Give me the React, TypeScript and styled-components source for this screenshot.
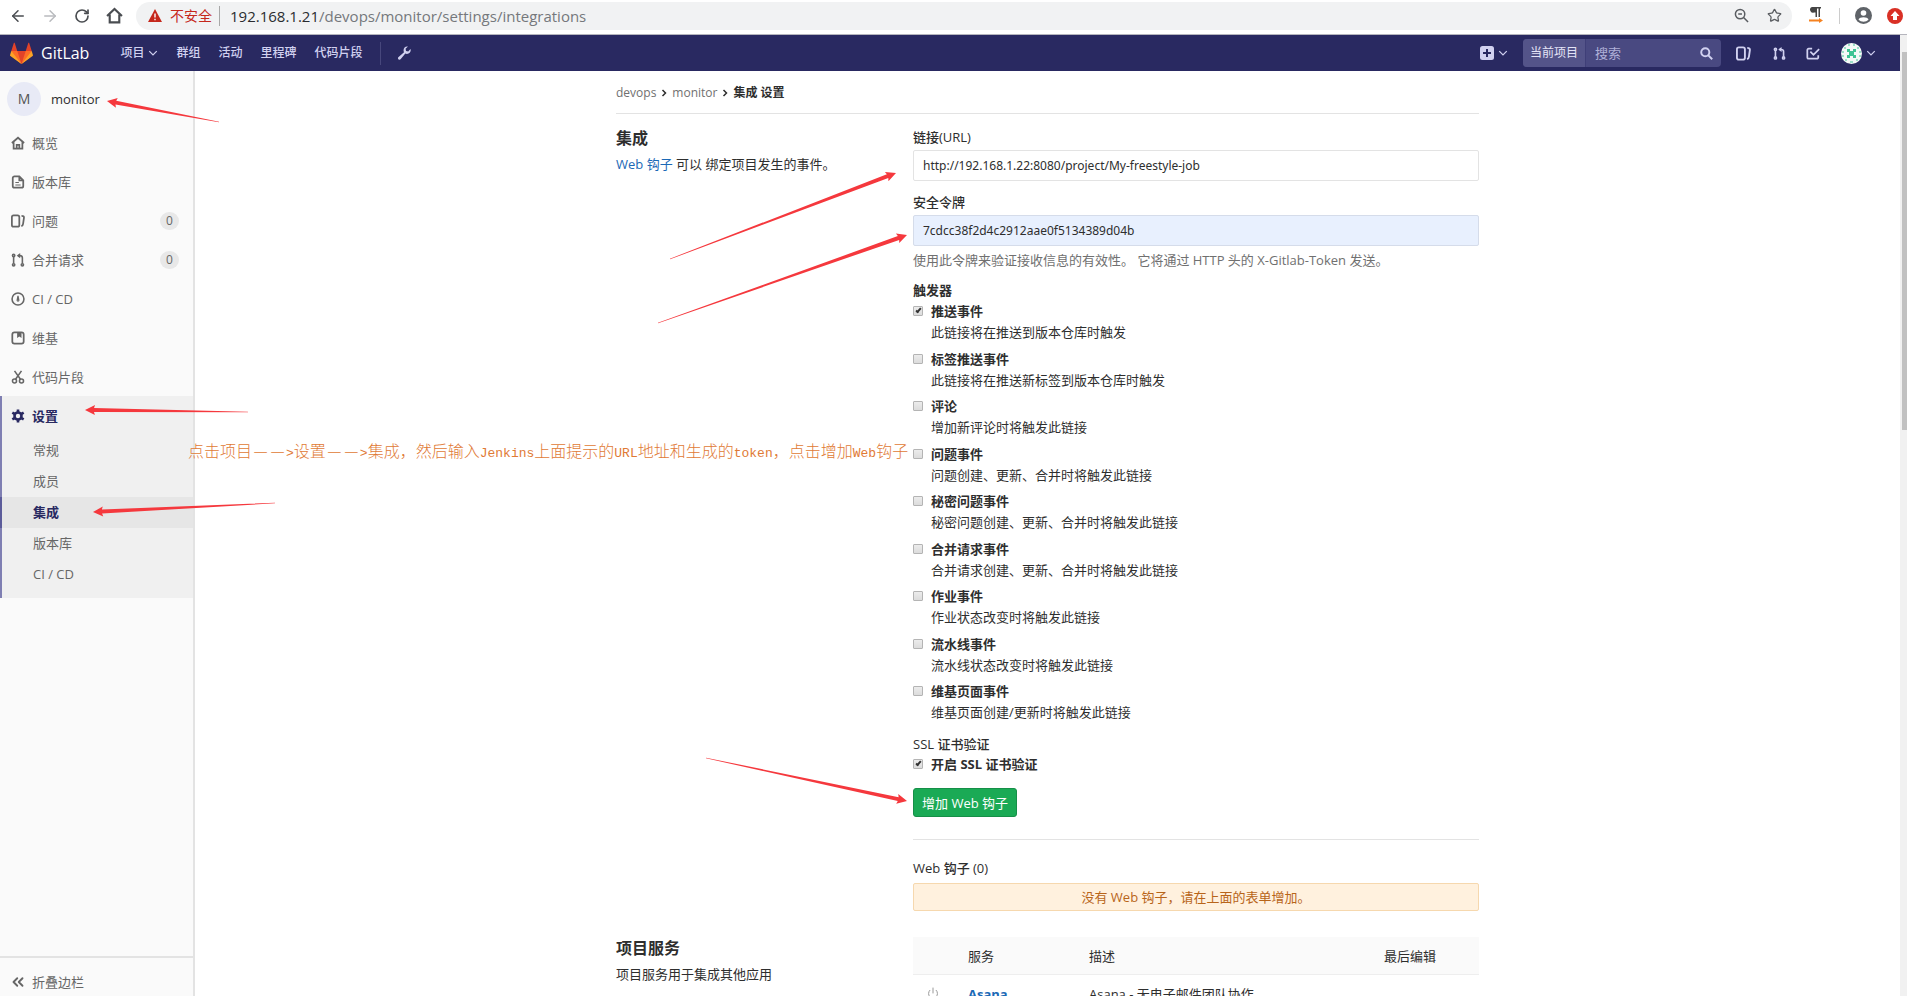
import React from 'react';
import styled, { createGlobalStyle, css } from 'styled-components';
import { ArrowLeft, ArrowRight, RotateCw, Star, Power, ChevronsLeft } from 'lucide-react';

const cjk = '"Open Sans", "Noto Sans CJK SC", sans-serif';

const Global = createGlobalStyle`
  *, *::before, *::after { box-sizing: border-box; }
  body { margin: 0; background: #fff; color: #2e2e2e; font: 13px/20px ${cjk}; overflow: hidden; }
  button, input { font: inherit; color: inherit; }
  a { color: inherit; text-decoration: none; }
  h2, p, ul, fieldset { margin: 0; padding: 0; border: 0; list-style: none; }
`;

const Screen = styled.div`
  position: relative;
  display: flex;
  flex-direction: column;
  height: 100vh;
  overflow: hidden;
`;

/* Browser bar */
const BrowserBar = styled.div`
  display: flex;
  align-items: center;
  flex: none;
  height: 35px;
  padding: 0 4px 3px 8px;
  border-bottom: 1px solid #b5b5bd;
  color: #5a5d61;
`;
const BarButton = styled.button<{ $dim?: boolean }>`
  display: flex;
  justify-content: center;
  flex: none;
  width: 20px;
  margin-right: 12px;
  padding: 0;
  border: 0;
  background: none;
  color: ${(p) => (p.$dim ? '#b9bbbe' : '#4a4d51')};
`;
const Address = styled.div`
  display: flex;
  align-items: center;
  flex: 1;
  height: 28px;
  padding: 0 10px 0 12px;
  border-radius: 14px;
  background: #f1f2f3;
`;
const Insecure = styled.span`
  margin-left: 8px;
  padding-right: 7px;
  border-right: 1px solid #a8a8a8;
  color: #c5281c;
  font-size: 14px;
`;
const Url = styled.span`
  flex: 1;
  margin-left: 10px;
  color: #75787c;
  font-size: 15px;
  b { font-weight: 400; color: #2a2c2f; }
`;
const AddressTools = styled.div`
  display: flex;
  align-items: center;
  gap: 18px;
`;
const Extensions = styled.div`
  display: flex;
  align-items: center;
  gap: 15px;
  margin-left: 15px;
`;
const Rule = styled.span<{ $color: string; $height: number }>`
  width: 1px;
  height: ${(p) => p.$height}px;
  background: ${(p) => p.$color};
`;

/* Page under the browser bar */
const Viewport = styled.div`
  display: flex;
  flex: 1;
  min-height: 0;
`;
const Page = styled.div`
  display: flex;
  flex-direction: column;
  flex: 1;
  min-width: 0;
`;
const ScrollTrack = styled.div`
  display: flex;
  flex-direction: column;
  flex: none;
  width: 7px;
  padding: 17px 0 0 2px;
  background: #f1f1f1;
`;
const ScrollThumb = styled.div`
  height: 40%;
  background: #c1c1c1;
`;

const Navbar = styled.header`
  display: flex;
  align-items: center;
  justify-content: space-between;
  flex: none;
  height: 36px;
  padding: 0 24px 0 10px;
  background: #292961;
  color: #d1d1f0;
`;
const NavGroup = styled.nav`
  display: flex;
  align-items: center;
`;
const Brand = styled.a`
  display: flex;
  align-items: center;
  gap: 8px;
  margin-right: 31px;
  color: #fff;
  font-size: 16px;
`;
const NavLink = styled.a`
  display: flex;
  align-items: center;
  gap: 4px;
  margin-right: 18px;
  font-size: 12px;
  font-weight: 500;
`;
const NavButton = styled.button<{ $gap?: number }>`
  display: flex;
  align-items: center;
  gap: 4px;
  padding: 0;
  border: 0;
  background: none;
  margin-left: ${(p) => p.$gap ?? 0}px;
`;
const Search = styled.form`
  display: flex;
  align-items: center;
  width: 198px;
  height: 28px;
  margin-left: 15px;
  padding-right: 8px;
  border-radius: 4px;
  overflow: hidden;
  background: #494981;
`;
const SearchScope = styled.span`
  padding: 4px 7px;
  border-right: 1px solid #3f3f78;
  background: #545489;
  color: #e4e4f7;
  font-size: 12px;
`;
const SearchInput = styled.input`
  flex: 1;
  min-width: 0;
  padding: 0 9px;
  border: 0;
  background: none;
  &::placeholder { color: #b0b0d8; opacity: 1; }
`;

const Body = styled.div`
  display: flex;
  flex: 1;
  min-height: 0;
`;
const Sidebar = styled.aside`
  display: flex;
  flex-direction: column;
  flex: none;
  width: 195px;
  border-right: 2px solid #e3e3e3;
  background: #fafafa;
  color: #666;
`;
const Project = styled.a`
  display: flex;
  align-items: center;
  gap: 10px;
  padding: 11px 7px 7px;
  color: #2e2e2e;
  font-weight: 500;
`;
const Initial = styled.span`
  width: 34px;
  height: 34px;
  border-radius: 50%;
  background: #e8eaf6;
  color: #555;
  font-size: 14px;
  line-height: 34px;
  text-align: center;
`;
const Menu = styled.ul`
  flex: 1;
`;
const activeText = css`
  color: #292961;
  font-weight: 700;
`;
const MenuLink = styled.a<{ $active?: boolean }>`
  display: flex;
  align-items: center;
  gap: 7px;
  height: 39px;
  padding: 0 14px 0 11px;
  ${(p) => p.$active && activeText}
`;
const MenuLabel = styled.span`
  flex: 1;
`;
const Count = styled.span`
  width: 19px;
  border-radius: 9px;
  background: #e8e8e8;
  font-size: 12px;
  line-height: 18px;
  text-align: center;
`;
const ActiveGroup = styled.li`
  padding-bottom: 8px;
  background: #f0f0f0;
  box-shadow: inset 2px 0 #7f7fb2;
`;
const SubLink = styled.a<{ $active?: boolean }>`
  display: block;
  padding: 0 33px;
  line-height: 31px;
  ${(p) => p.$active && css`${activeText} background: #e6e6e6; box-shadow: inset 2px 0 #5c5c9a;`}
`;
const Collapse = styled.button`
  display: flex;
  align-items: center;
  gap: 5px;
  height: 40px;
  padding: 10px 9px 0;
  border: 0;
  border-top: 2px solid #e3e3e3;
  background: none;
`;

const Main = styled.main`
  flex: 1;
  min-width: 0;
  overflow: hidden;
`;
const Container = styled.div`
  max-width: 863px;
  margin: 0 auto;
`;
const Breadcrumbs = styled.nav`
  display: flex;
  align-items: center;
  gap: 4px;
  height: 43px;
  padding-top: 2px;
  border-bottom: 1px solid #e3e3e3;
  color: #707070;
  font-size: 12px;
  svg { color: #2e2e2e; }
  b { color: #2e2e2e; }
`;
const Section = styled.section<{ $top: number }>`
  display: grid;
  grid-template-columns: 297px minmax(0, 1fr);
  padding-top: ${(p) => p.$top}px;
`;
const Title = styled.h2`
  margin-bottom: 4px;
  font-size: 16px;
  line-height: 24px;
`;
const TextLink = styled.a<{ $bold?: boolean }>`
  color: #1b69b6;
  font-weight: ${(p) => (p.$bold ? 700 : 400)};
`;
const Field = styled.div`
  display: flex;
  flex-direction: column;
  margin-bottom: 10px;
`;
const Caption = styled.label`
  margin-bottom: 2px;
  font-weight: 500;
  line-height: 22px;
`;
const TextInput = styled.input<{ $filled?: boolean }>`
  height: 31px;
  padding: 0 9px;
  border: 1px solid ${(p) => (p.$filled ? '#d5dcea' : '#e3e3e3')};
  border-radius: 2px;
  background: ${(p) => (p.$filled ? '#e8f0fe' : '#fff')};
  font-family: "Noto Sans", sans-serif;
  font-size: 12px;
`;
const Hint = styled.p`
  margin-top: 4px;
  color: #707070;
`;
const Legend = styled.div`
  margin-bottom: 1px;
  font-weight: 700;
`;
const Options = styled.div`
  display: flex;
  flex-direction: column;
  justify-content: space-between;
  min-height: 422px;
`;
const Option = styled.label`
  display: grid;
  grid-template-columns: 10px 1fr;
  column-gap: 8px;
  line-height: 21px;
  b { font-weight: 700; }
  span { grid-column: 2; }
`;
const Check = styled.input`
  appearance: none;
  width: 10px;
  height: 10px;
  margin: 5px 0 0;
  border: 1px solid #b4b4b4;
  border-radius: 1px;
  background: linear-gradient(#ececec, #dcdcdc);
  &:checked::after {
    content: '';
    display: block;
    width: 3px;
    height: 6px;
    margin: 0 0 0 3px;
    border: solid #333;
    border-width: 0 2px 2px 0;
    transform: rotate(40deg);
  }
`;
const Submit = styled.button`
  align-self: flex-start;
  height: 29px;
  margin-top: 13px;
  padding: 0 8px;
  border: 1px solid #168f48;
  border-radius: 3px;
  background: #1aaa55;
  color: #fff;
`;
const Form = styled.form`
  display: flex;
  flex-direction: column;
  padding-bottom: 22px;
  border-bottom: 1px solid #e3e3e3;
`;
const SslTitle = styled.div`
  margin-top: 11px;
  font-weight: 500;
`;
const HooksTitle = styled.div`
  margin: 18px 0 5px;
  font-weight: 500;
`;
const Notice = styled.div`
  padding: 3px;
  border: 1px solid #f6d8ae;
  border-radius: 2px;
  background: #fff1de;
  color: #b8651a;
  text-align: center;
`;
const Services = styled.table`
  width: 100%;
  margin-top: 1px;
  border-collapse: collapse;
  table-layout: fixed;
  th, td { padding: 9px 0 8px; text-align: left; font-weight: 400; }
  th { background: #fafafa; border-bottom: 1px solid #eee; }
  td { white-space: nowrap; }
  td:first-child { padding-left: 14px; color: #999; }
`;

/* Hand-made notes on top of the page */
const Overlay = styled.svg`
  position: absolute;
  top: 0;
  left: 0;
  width: 100%;
  height: 100%;
  pointer-events: none;
`;
const Remark = styled.p`
  position: absolute;
  top: 438px;
  left: 188px;
  color: #df7a35;
  font-family: "Noto Sans CJK SC", sans-serif;
  font-size: 16px;
  font-weight: 300;
  line-height: 24px;
  white-space: nowrap;
  code { font: 13px/24px "Liberation Mono", monospace; }
`;
const Dash = styled.span`
  display: inline-block;
  width: 17px;
  text-align: center;
`;

type IconProps = { size?: number; children: React.ReactNode; width?: number };
const Icon = ({ size = 14, width = 2, children }: IconProps) => (
  <svg width={size} height={size} viewBox="0 0 16 16" fill="none" stroke="currentColor" strokeWidth={width} aria-hidden="true">
    {children}
  </svg>
);
const Chevron = () => (
  <Icon size={10}><path d="M2 5l6 6 6-6" /></Icon>
);
const IssuesShape = () => (
  <><rect x="1" y="1.5" width="8.5" height="13" rx="2" /><path d="M12 2c2 0 3 .8 2.8 2.300l-1 7c-.2 1.500-.7 2.200-2 2.700" /></>
);
const MergeShape = () => (
  <><circle cx="3" cy="13.500" r="1.300" /><circle cx="13" cy="13.500" r="1.300" /><circle cx="3" cy="2.800" r="1.300" /><path d="M3 4v8M13 12V5.500c0-1.500-1-2.500-3-2.500H8" /><path fill="currentColor" stroke="none" d="M10.500 0v6L6.500 3z" /></>
);

const Logo = () => (
  <svg width="23" height="23" viewBox="0 0 36 36" aria-hidden="true">
    <path fill="#e24329" d="M2 14l9.380 9v-9l-4-12.280c-.205-.632-1.176-.632-1.380 0z" />
    <path fill="#e24329" d="M34 14l-9.380 9v-9l4-12.280c.205-.632 1.176-.632 1.380 0z" />
    <path fill="#e24329" d="M18 34.380L3 14h30z" />
    <path fill="#fc6d26" d="M18 34.380L11.380 14H2l4 11z" />
    <path fill="#fc6d26" d="M18 34.380L24.620 14H34l-4 11z" />
    <path fill="#fca326" d="M2 14L.1 20.160c-.18.565 0 1.200.5 1.560l17.420 12.660z" />
    <path fill="#fca326" d="M34 14l1.900 6.160c.18.565 0 1.200-.5 1.560L18 34.380z" />
  </svg>
);

const Identicon = () => (
  <svg width="21" height="21" viewBox="0 0 21 21" aria-hidden="true">
    <circle cx="10.500" cy="10.500" r="10.500" fill="#f4f9f7" />
    <g fill="#3fc495">
      <path d="M6 6h3v2h3V6h3v3h-2v3h2v3h-3v-2H9v2H6v-3h2V9H6z" />
    </g>
    <path fill="#9be0c8" d="M7 1h2v2H7zM12 1h2v2h-2zM3 4h2v2H3zM16 4h2v2h-2zM1 8h2v2H1zM18 8h2v2h-2zM1 12h2v2H1zM18 12h2v2h-2zM4 16h2v2H4zM15 16h2v2h-2zM9 18h3v2H9z" />
  </svg>
);

type ArrowProps = { tail: [number, number]; tip: [number, number] };
const Arrow = ({ tail, tip }: ArrowProps) => {
  const dx = tip[0] - tail[0];
  const dy = tip[1] - tail[1];
  const len = Math.hypot(dx, dy);
  const angle = (Math.atan2(dy, dx) * 180) / Math.PI;
  const neck = len - 9;
  return (
    <path
      fill="#f5383d"
      transform={`translate(${tail[0]} ${tail[1]}) rotate(${angle})`}
      d={`M0 -.3L${neck} -2L${neck - 1} -5L${len} 0L${neck - 1} 5L${neck} 2L0 .3Z`}
    />
  );
};

const arrows: ArrowProps[] = [
  { tail: [219, 122], tip: [107, 101] },
  { tail: [248, 412], tip: [85, 410] },
  { tail: [275, 503], tip: [93, 512] },
  { tail: [670, 259], tip: [896, 173] },
  { tail: [658, 323], tip: [907, 235] },
  { tail: [706, 758], tip: [907, 801] },
];

const menu: { label: string; count?: number; icon: React.ReactNode }[] = [
  { label: '概览', icon: <Icon><path d="M1 8l7-6 7 6M3 7v7.500h10V7M6.500 14v-4h3v4" /></Icon> },
  { label: '版本库', icon: <Icon><path d="M9.500 1.500H4a2 2 0 00-2 2v9a2 2 0 002 2h8a2 2 0 002-2V6zM9.500 1.500V6H14" /><path strokeWidth="1.200" d="M5 8.500h4M5 11.500h6" /></Icon> },
  { label: '问题', count: 0, icon: <Icon><IssuesShape /></Icon> },
  { label: '合并请求', count: 0, icon: <Icon width={1.8}><MergeShape /></Icon> },
  { label: 'CI / CD', icon: <Icon width={1.8}><circle cx="8" cy="8" r="6.800" /><path strokeWidth="1.400" d="M8 4.500L7 9.500a1 1 0 002 0z" /></Icon> },
  { label: '维基', icon: <Icon><rect x="1.500" y="1.500" width="13" height="13" rx="2.500" /><path fill="currentColor" stroke="none" d="M7 2h5v6L9.500 6.200 7 8z" /></Icon> },
  { label: '代码片段', icon: <Icon width={1.8}><circle cx="4" cy="12.500" r="2.300" /><circle cx="12" cy="12.500" r="2.300" /><path d="M10.800 10.500L4 1M5.200 10.500L12 1" /></Icon> },
];

const submenu = ['常规', '成员', '集成', '版本库', 'CI / CD'];

const triggers: [string, string][] = [
  ['推送事件', '此链接将在推送到版本仓库时触发'],
  ['标签推送事件', '此链接将在推送新标签到版本仓库时触发'],
  ['评论', '增加新评论时将触发此链接'],
  ['问题事件', '问题创建、更新、合并时将触发此链接'],
  ['秘密问题事件', '秘密问题创建、更新、合并时将触发此链接'],
  ['合并请求事件', '合并请求创建、更新、合并时将触发此链接'],
  ['作业事件', '作业状态改变时将触发此链接'],
  ['流水线事件', '流水线状态改变时将触发此链接'],
  ['维基页面事件', '维基页面创建/更新时将触发此链接'],
];

const Browser = () => (
  <BrowserBar>
    <BarButton aria-label="back"><ArrowLeft size={18} /></BarButton>
    <BarButton aria-label="forward" $dim><ArrowRight size={18} /></BarButton>
    <BarButton aria-label="reload"><RotateCw size={16} strokeWidth={2.5} /></BarButton>
    <BarButton aria-label="home"><Icon size={17}><path d="M1 8.500L8 1.800l7 6.700M3.500 7v7.500h9V7" /></Icon></BarButton>
    <Address>
      <svg width="14" height="13" viewBox="0 0 14 13" aria-hidden="true">
        <path fill="#c5281c" d="M7 0l7 13H0z" /><path stroke="#fff" strokeWidth="1.400" d="M7 4.500v4M7 9.800v1.400" />
      </svg>
      <Insecure>不安全</Insecure>
      <Url><b>192.168.1.21</b>/devops/monitor/settings/integrations</Url>
      <AddressTools>
        <Icon size={15} width={1.6}><circle cx="6.500" cy="6.500" r="5" /><path d="M10.200 10.200l4.800 4.800M4.500 6.500h4" /></Icon>
        <Star size={15} />
      </AddressTools>
    </Address>
    <Extensions>
      <svg width="17" height="17" viewBox="0 0 17 17" aria-hidden="true">
        <path fill="#444" d="M5 0h9v1.500h-1V10h-1.500V1.500H10V10H8.500V5.500H7A2.800 2.800 0 015 0z" />
        <path fill="#f58220" d="M2 12.500h10v-1.500l4 2.500-4 2.500v-1.500H2z" />
      </svg>
      <Rule $color="#ccc" $height={16} />
      <svg width="17" height="17" viewBox="0 0 17 17" aria-hidden="true">
        <circle cx="8.500" cy="8.500" r="8.500" fill="#5f6368" /><circle cx="8.500" cy="6" r="2.800" fill="#fff" />
        <path fill="#fff" d="M3.500 12.500c1-3 9-3 10 0-2.500 3-7.500 3-10 0z" />
      </svg>
      <svg width="16" height="16" viewBox="0 0 16 16" aria-hidden="true">
        <circle cx="8" cy="8" r="8" fill="#d93025" /><path fill="#fff" d="M8 3l4.500 5H10v4H6V8H3.500z" />
      </svg>
    </Extensions>
  </BrowserBar>
);

const Header = () => (
  <Navbar>
    <NavGroup>
      <Brand href="#"><Logo />GitLab</Brand>
      <NavLink href="#">项目<Chevron /></NavLink>
      <NavLink href="#">群组</NavLink>
      <NavLink href="#">活动</NavLink>
      <NavLink href="#">里程碑</NavLink>
      <NavLink href="#">代码片段</NavLink>
      <Rule $color="#47477c" $height={23} />
      <NavButton aria-label="admin" $gap={16}>
        <svg width="14" height="14" viewBox="0 0 16 16" aria-hidden="true">
          <path fill="currentColor" d="M12.500.6L9.800 3.200l.5 2.500 2.500.5 2.600-2.700c1 2.600-.8 5.600-4 5.600-.8 0-1.300-.1-1.900-.4l-5.400 6.500c-1.600 1.500-4-.6-2.600-2.400L8 7.200C6.300 3.300 9.200-.3 12.500.6z" />
        </svg>
      </NavButton>
    </NavGroup>
    <NavGroup>
      <NavButton aria-label="new">
        <svg width="14" height="14" viewBox="0 0 14 14" aria-hidden="true">
          <rect width="14" height="14" rx="2.500" fill="#d1d1f0" /><path stroke="#292961" strokeWidth="2" d="M7 3v8M3 7h8" />
        </svg>
        <Chevron />
      </NavButton>
      <Search>
        <SearchScope>当前项目</SearchScope>
        <SearchInput placeholder="搜索" aria-label="搜索" />
        <Icon size={13} width={2.4}><circle cx="6.500" cy="6.500" r="5" /><path d="M10 10l5 5" /></Icon>
      </Search>
      <NavButton aria-label="issues" $gap={15}><Icon size={15}><IssuesShape /></Icon></NavButton>
      <NavButton aria-label="merge requests" $gap={22}><Icon size={13}><MergeShape /></Icon></NavButton>
      <NavButton aria-label="todos" $gap={20}><Icon><path d="M7 3H3a1.500 1.500 0 00-1.500 1.500V13A1.500 1.500 0 003 14.500h9.500A1.500 1.500 0 0014 13v-2.500M5 6.500L8.500 10 15 3.500" /></Icon></NavButton>
      <NavButton aria-label="account" $gap={21}><Identicon /><Chevron /></NavButton>
    </NavGroup>
  </Navbar>
);

const Side = () => (
  <Sidebar>
    <Project href="#"><Initial>M</Initial>monitor</Project>
    <Menu>
      {menu.map((m) => (
        <li key={m.label}>
          <MenuLink href="#">
            {m.icon}
            <MenuLabel>{m.label}</MenuLabel>
            {m.count !== undefined && <Count>{m.count}</Count>}
          </MenuLink>
        </li>
      ))}
      <ActiveGroup>
        <MenuLink href="#" $active>
          <Icon>
            <circle cx="8" cy="8" r="4" strokeWidth="3" />
            <path strokeWidth="3" d="M8 .5v3M8 12.500v3M1.500 4.200l2.600 1.500M11.900 10.300l2.600 1.500M1.500 11.800l2.600-1.500M11.900 5.700l2.600-1.500" />
          </Icon>
          <MenuLabel>设置</MenuLabel>
        </MenuLink>
        {submenu.map((s) => <SubLink href="#" key={s} $active={s === '集成'}>{s}</SubLink>)}
      </ActiveGroup>
    </Menu>
    <Collapse><ChevronsLeft size={18} strokeWidth={2.5} />折叠边栏</Collapse>
  </Sidebar>
);

const Dashes = () => <><Dash>—</Dash><Dash>—</Dash></>;

export default function App() {
  return (
    <Screen>
      <Global />
      <Browser />
      <Viewport>
        <Page>
          <Header />
          <Body>
            <Side />
            <Main>
              <Container>
                <Breadcrumbs>
                  <a href="#">devops</a><Icon size={8} width={3}><path d="M5 2l6 6-6 6" /></Icon>
                  <a href="#">monitor</a><Icon size={8} width={3}><path d="M5 2l6 6-6 6" /></Icon>
                  <b>集成 设置</b>
                </Breadcrumbs>
                <Section $top={12}>
                  <div>
                    <Title>集成</Title>
                    <p><TextLink href="#">Web 钩子</TextLink> 可以 绑定项目发生的事件。</p>
                  </div>
                  <div>
                    <Form>
                      <Field>
                        <Caption htmlFor="url">链接(URL)</Caption>
                        <TextInput id="url" defaultValue="http://192.168.1.22:8080/project/My-freestyle-job" />
                      </Field>
                      <Field>
                        <Caption htmlFor="token">安全令牌</Caption>
                        <TextInput id="token" $filled defaultValue="7cdcc38f2d4c2912aae0f5134389d04b" />
                        <Hint>使用此令牌来验证接收信息的有效性。 它将通过 HTTP 头的 X-Gitlab-Token 发送。</Hint>
                      </Field>
                      <Legend>触发器</Legend>
                      <Options>
                        {triggers.map(([name, text], i) => (
                          <Option key={name}>
                            <Check type="checkbox" defaultChecked={i === 0} />
                            <b>{name}</b>
                            <span>{text}</span>
                          </Option>
                        ))}
                      </Options>
                      <SslTitle>SSL 证书验证</SslTitle>
                      <Option>
                        <Check type="checkbox" defaultChecked />
                        <b>开启 SSL 证书验证</b>
                      </Option>
                      <Submit type="button">增加 Web 钩子</Submit>
                    </Form>
                    <HooksTitle>Web 钩子 (0)</HooksTitle>
                    <Notice>没有 Web 钩子，请在上面的表单增加。</Notice>
                  </div>
                </Section>
                <Section $top={25}>
                  <div>
                    <Title>项目服务</Title>
                    <p>项目服务用于集成其他应用</p>
                  </div>
                  <Services>
                    <colgroup><col width="55" /><col width="121" /><col /><col width="95" /></colgroup>
                    <thead>
                      <tr><th aria-label="status" /><th>服务</th><th>描述</th><th>最后编辑</th></tr>
                    </thead>
                    <tbody>
                      <tr>
                        <td><Power size={12} /></td>
                        <td><TextLink href="#" $bold>Asana</TextLink></td>
                        <td>Asana - 无电子邮件团队协作</td>
                        <td />
                      </tr>
                    </tbody>
                  </Services>
                </Section>
              </Container>
            </Main>
          </Body>
        </Page>
        <ScrollTrack><ScrollThumb /></ScrollTrack>
      </Viewport>
      <Overlay>{arrows.map((a) => <Arrow key={a.tip.join()} {...a} />)}</Overlay>
      <Remark>
        点击项目<Dashes /><code>&gt;</code>设置<Dashes /><code>&gt;</code>集成，然后输入<code>Jenkins</code>上面提示的<code>URL</code>地址和生成的<code>token</code>，点击增加<code>Web</code>钩子
      </Remark>
    </Screen>
  );
}
